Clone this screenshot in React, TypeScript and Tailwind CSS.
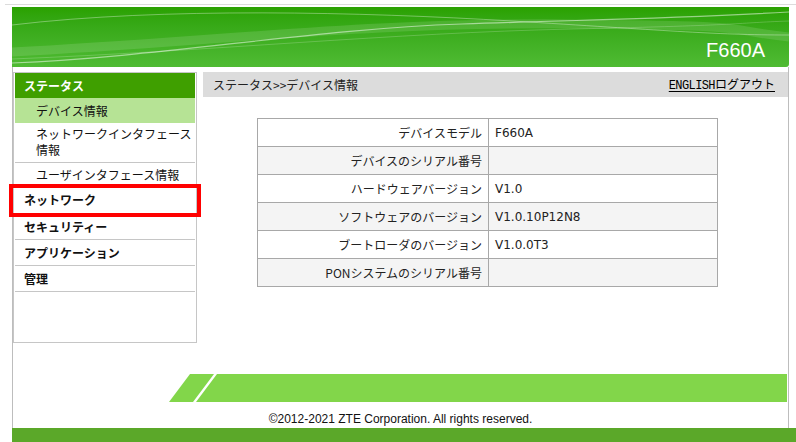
import React from 'react';

const jp = { fontFamily: '"Noto Sans CJK JP", "Liberation Sans", sans-serif' };

const rows = [
  { label: 'デバイスモデル', value: 'F660A' },
  { label: 'デバイスのシリアル番号', value: '' },
  { label: 'ハードウェアバージョン', value: 'V1.0' },
  { label: 'ソフトウェアのバージョン', value: 'V1.0.10P12N8' },
  { label: 'ブートローダのバージョン', value: 'V1.0.0T3' },
  { label: 'PONシステムのシリアル番号', value: '' },
];

function Banner() {
  return (
    <div className="relative ml-[12px] mt-[2px] h-[60px] w-[777px] overflow-hidden rounded-br-[3px] bg-gradient-to-b from-[#2aa100] to-[#4fbb33]">
      <svg className="absolute inset-0" width="777" height="60" viewBox="0 0 777 60" fill="none">
        <path d="M0 45 C 200 35, 350 15, 560 17 S 700 22, 777 30" stroke="white" strokeOpacity="0.12" strokeWidth="9" />
        <path d="M0 18 C 150 0, 350 5, 500 14 S 700 28, 777 28" stroke="white" strokeOpacity="0.35" strokeWidth="1" />
        <path d="M0 56 C 150 50, 300 22, 450 17 S 650 12, 777 5" stroke="white" strokeOpacity="0.5" strokeWidth="1.2" />
        <path d="M0 52 C 200 44, 380 26, 560 22 S 720 16, 777 14" stroke="white" strokeOpacity="0.2" strokeWidth="1" />
      </svg>
      <div className="absolute bottom-[7px] right-[24px] text-[20px] leading-none text-white" style={{ fontFamily: '"Liberation Sans", Arial, sans-serif' }}>
        F660A
      </div>
    </div>
  );
}

function Sidebar() {
  const top = ['セキュリティー', 'アプリケーション', '管理'];
  return (
    <div className="relative h-[271px] w-[184px] shrink-0 border border-[#c6c6c6] px-px text-[12px] text-[#111]">
      <div className="flex h-[25px] items-center bg-[#3f9f00] pl-[9px] font-bold text-white">ステータス</div>
      <div className="flex h-[25px] items-center bg-[#b6e395] pl-[21px]">デバイス情報</div>
      <div className="border-b border-[#c6c6c6] pl-[21px] pt-[3px] pb-[4px] leading-[16px]">
        ネットワークインタフェース<br />情報
      </div>
      <div className="flex h-[24px] items-center pl-[21px]">ユーザインタフェース情報</div>
      <div className="flex h-[27px] items-center border-b border-[#c6c6c6] pl-[9px] font-bold">ネットワーク</div>
      {top.map((t) => (
        <div key={t} className="flex h-[26px] items-center border-b border-[#c6c6c6] pl-[9px] font-bold">{t}</div>
      ))}
      {/* highlight */}
      <div className="absolute left-[-5px] top-[111px] h-[33px] w-[192px] border-4 border-[#ff0000]" />
    </div>
  );
}

function InfoTable() {
  return (
    <table className="ml-[54px] mt-[21px] w-[461px] border-collapse text-[12px] text-[#222]">
      <tbody>
        {rows.map((r, i) => (
          <tr key={r.label} className={i % 2 === 1 ? 'bg-[#f4f4f4]' : 'bg-white'}>
            <td className="h-[28px] w-[231px] border border-[#a8a8a8] pr-[6px] text-right">{r.label}</td>
            <td className="h-[28px] border border-[#a8a8a8] pl-[6px]" style={{ fontFamily: '"DejaVu Sans", sans-serif' }}>
              {r.value}
            </td>
          </tr>
        ))}
      </tbody>
    </table>
  );
}

export default function App() {
  return (
    <div className="relative h-[442px] w-[796px] overflow-hidden bg-white" style={jp}>
      <div className="ml-[5px] mt-[4px] h-px bg-[#dcdcdc]" />
      <Banner />

      <div className="ml-[12px] w-[777px] border-x border-[#bdbdbd]">
        <div className="flex pt-[5px]">
          <Sidebar />
          <div className="ml-[6px] flex-1">
            <div className="flex h-[25px] items-center justify-between bg-[#dcdcdc] pl-[10px] pr-[13px] text-[12px] text-[#222]">
              <span>ステータス&gt;&gt;デバイス情報</span>
              <span className="text-black underline underline-offset-2">
                <span className="text-[12px] tracking-[-0.6px]" style={{ fontFamily: '"Liberation Mono", monospace' }}>ENGLISH</span>
                ログアウト
              </span>
            </div>
            <InfoTable />
          </div>
        </div>

        {/* footer band */}
        <div className="mt-[31px] h-[28px]">
          <svg width="775" height="28" viewBox="0 0 775 28">
            <polygon points="156,28 180,28 201,0 177,0" fill="#82d64a" />
            <polygon points="183,28 774,28 774,0 204,0" fill="#82d64a" />
          </svg>
        </div>
        <div className="h-[26px] pt-[10px] text-center text-[12px] leading-[14px] text-[#111]" style={{ fontFamily: '"Liberation Sans", Arial, sans-serif' }}>
          ©2012-2021 ZTE Corporation. All rights reserved.
        </div>
      </div>
      <div className="ml-[12px] h-[14px] bg-[#5ba829]" />
    </div>
  );
}
